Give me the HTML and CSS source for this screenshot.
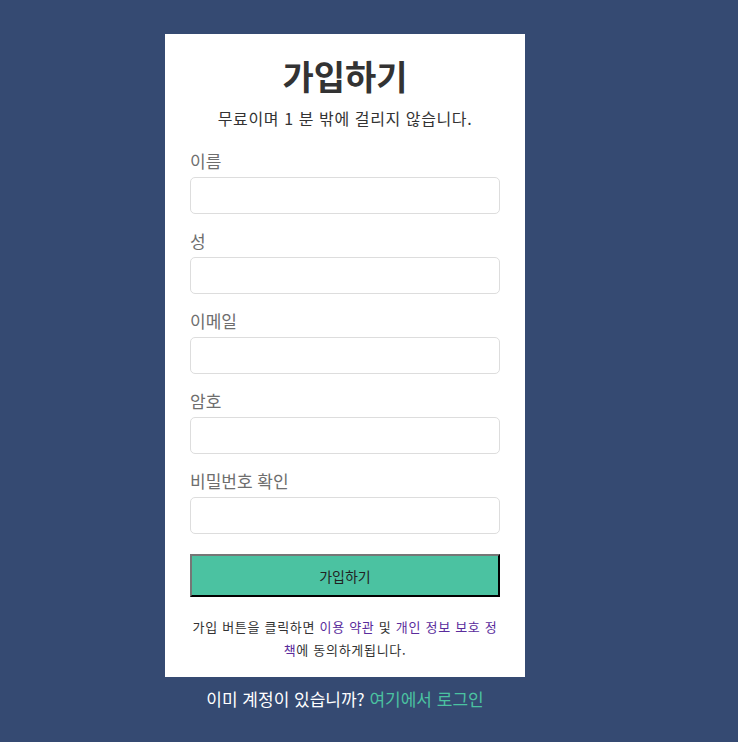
FILE: index.html
```html
<!DOCTYPE html>
<html lang="ko">
<head>
    <meta charset="UTF-8">
    <meta name="viewport" content="width=device-width, initial-scale=1.0">
    <title>가입하기</title>
    <link rel="stylesheet" href="styles.css">
</head>
<body>
    <div class="wrapper">
        <div class="container">
            <h1>가입하기</h1>
            <p class="subtitle">무료이며 1 분 밖에 걸리지 않습니다.</p>
            <form id="signup-form">
                <div class="form-group">
                    <label for="firstName">이름</label>
                    <input type="text" id="firstName">
                </div>
                <div class="form-group">
                    <label for="lastName">성</label>
                    <input type="text" id="lastName">
                </div>
                <div class="form-group">
                    <label for="email">이메일</label>
                    <input type="email" id="email">
                </div>
                <div class="form-group">
                    <label for="password">암호</label>
                    <input type="password" id="password">
                </div>
                <div class="form-group">
                    <label for="confirmPassword">비밀번호 확인</label>
                    <input type="password" id="confirmPassword">
                </div>
                <button class="btn" type="submit">가입하기</button>
                <p class="terms">가입 버튼을 클릭하면 <a href="#">이용 약관</a> 및 <a href="#">개인 정보 보호 정책</a>에 동의하게됩니다.</p>
            </form>
        </div>
        <p class="login-text">이미 계정이 있습니까? <a href="#">여기에서 로그인</a></p>
    </div>
</body>
</html>
```

FILE: styles.css
```css
/* General Styles */
* {
    margin: 0;
    padding: 0;
    box-sizing: border-box;
    font-family: "Noto Sans CJK KR", "Noto Sans", sans-serif;
}

body {
    background-color: #354a72;
    color: #333;
}

.wrapper {
    width: 360px;
    margin: 34px 0 0 165px;
}

.container {
    background-color: #fff;
    padding: 17px 25px 16px;
}

h1 {
    text-align: center;
    font-size: 34px;
    line-height: 50px;
    font-weight: bold;
    color: #333;
}

.subtitle {
    text-align: center;
    font-size: 16px;
    line-height: 24px;
    letter-spacing: 0.6px;
    margin-top: 5px;
    margin-bottom: 19px;
}

.form-group {
    margin-bottom: 15px;
}

label {
    display: block;
    font-size: 17px;
    line-height: 24px;
    color: #6e6e6e;
    margin-bottom: 4px;
}

input[type="text"], input[type="password"], input[type="email"] {
    display: block;
    width: 100%;
    height: 37px;
    padding: 0 10px;
    border: 1px solid #ddd;
    border-radius: 5px;
    font-size: 16px;
    outline: none;
}

.btn {
    display: block;
    width: 100%;
    height: 43px;
    margin-top: 20px;
    background-color: #4bc2a1;
    border: 2px outset #767676;
    border-right-color: #222;
    border-bottom-color: #222;
    color: #222;
    font-size: 14px;
    cursor: pointer;
}

.terms {
    text-align: center;
    font-size: 13px;
    line-height: 23px;
    letter-spacing: 0.7px;
    word-break: break-all;
    margin-top: 18px;
    color: #333;
}

.terms a {
    color: #5a2c9c;
    text-decoration: none;
}

.login-text {
    text-align: center;
    font-size: 17px;
    line-height: 24px;
    margin-top: 10px;
    color: #fff;
}

.login-text a {
    color: #4bc2a1;
    text-decoration: none;
}
```
